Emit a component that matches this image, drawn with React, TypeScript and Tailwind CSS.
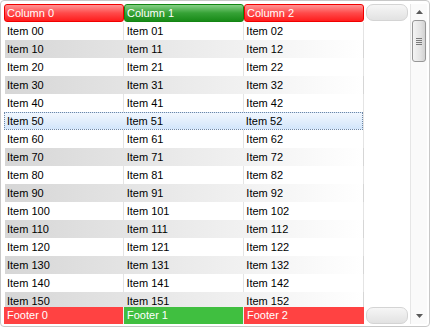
import React from "react";

const rows = Array.from({ length: 16 }, (_, i) => i);

export default function App() {
  const font = { fontFamily: '"Liberation Sans", Arial, sans-serif' };
  return (
    <div className="w-[430px] h-[327px] bg-white" style={font}>
      <div className="w-[430px] h-[327px] border border-[#c8c8c8] rounded-[4px] flex pl-[3px] pt-[3px] pr-[2px] pb-[2px] text-[11px] leading-none">
        {/* main grid */}
        <div className="w-[406px] flex flex-col">
          {/* header */}
          <div className="h-[18px] flex shrink-0">
            <div className="w-[120px] h-[18px] rounded-[3px] border border-[#f00000] bg-[linear-gradient(#ff9494,#ff4a4a_50%,#ff1c1c)] text-white flex items-center pl-[2px]">Column 0</div>
            <div className="w-[120px] h-[18px] rounded-[3px] border border-[#138513] bg-[linear-gradient(#86d086,#36a236_50%,#188a18)] text-white flex items-center pl-[2px]">Column 1</div>
            <div className="w-[120px] h-[18px] rounded-[3px] border border-[#f00000] bg-[linear-gradient(#ff9494,#ff4a4a_50%,#ff1c1c)] text-white flex items-center pl-[2px]">Column 2</div>
            <div className="ml-[2px] w-[42px] h-[17px] rounded-[7px] border border-[#d4d4d4] bg-[linear-gradient(#f6f6f6,#e2e2e2)]"></div>
          </div>
          {/* body */}
          <div className="flex-1 overflow-hidden relative">
            <div className="absolute top-0 bottom-0 left-[119px] w-px bg-[#e4e4e4]"></div>
            <div className="absolute top-0 bottom-0 left-[239px] w-px bg-[#e4e4e4]"></div>
            <div className="absolute top-0 bottom-0 left-[359px] w-px bg-[#e4e4e4]"></div>
            {rows.map((r) => {
              const sel = r === 5;
              const odd = r % 2 === 1;
              const cls = sel
                ? "bg-[linear-gradient(#f1f7fe,#d3e6fb)] border border-dotted border-[#6e87a6] w-[359px]"
                : odd
                ? "bg-[linear-gradient(to_right,#d6d6d6,#ffffff)] border border-transparent w-[360px]"
                : "border border-transparent w-[360px]";
              return (
                <div key={r} className={`relative h-[18px] flex items-center text-black ${cls}`}>
                  <div className="w-[120px] pl-[2px]">Item {r * 10 === 0 ? "00" : r * 10}</div>
                  <div className="w-[120px] pl-[2px]">Item {r === 0 ? "01" : r * 10 + 1}</div>
                  <div className="w-[119px] pl-[2px]">Item {r === 0 ? "02" : r * 10 + 2}</div>
                </div>
              );
            })}
          </div>
          {/* footer */}
          <div className="h-[17px] flex shrink-0">
            <div className="w-[120px] h-[17px] bg-[#ff4242] text-white flex items-center pl-[3px] border-r border-[#f0f0f0]">Footer 0</div>
            <div className="w-[120px] h-[17px] bg-[#40bf40] text-white flex items-center pl-[3px] border-r border-[#f0f0f0]">Footer 1</div>
            <div className="w-[120px] h-[17px] bg-[#ff4242] text-white flex items-center pl-[3px]">Footer 2</div>
            <div className="ml-[2px] w-[42px] h-[17px] rounded-[7px] border border-[#d4d4d4] bg-[linear-gradient(#f6f6f6,#e2e2e2)]"></div>
          </div>
        </div>
        {/* scrollbar */}
        <div className="w-[17px] flex flex-col items-center bg-[#fafafa] border-l border-[#e6e6e6]">
          <div className="h-[16px] flex items-center justify-center">
            <svg width="7" height="4" viewBox="0 0 7 4"><path d="M0 4 L3.5 0 L7 4 Z" fill="#5a5a5a" /></svg>
          </div>
          <div className="w-[14px] h-[42px] rounded-[3px] border border-[#979797] bg-[linear-gradient(to_right,#f4f4f4,#e4e4e4_60%,#d2d2d2)] flex flex-col items-center justify-center gap-[1px]">
            <div className="w-[6px] h-px bg-[#7a7a7a]"></div>
            <div className="w-[6px] h-px bg-[#7a7a7a]"></div>
            <div className="w-[6px] h-px bg-[#7a7a7a]"></div>
            <div className="w-[6px] h-px bg-[#7a7a7a]"></div>
          </div>
          <div className="flex-1"></div>
          <div className="h-[16px] flex items-center justify-center">
            <svg width="7" height="4" viewBox="0 0 7 4"><path d="M0 0 L3.5 4 L7 0 Z" fill="#5a5a5a" /></svg>
          </div>
        </div>
      </div>
    </div>
  );
}
